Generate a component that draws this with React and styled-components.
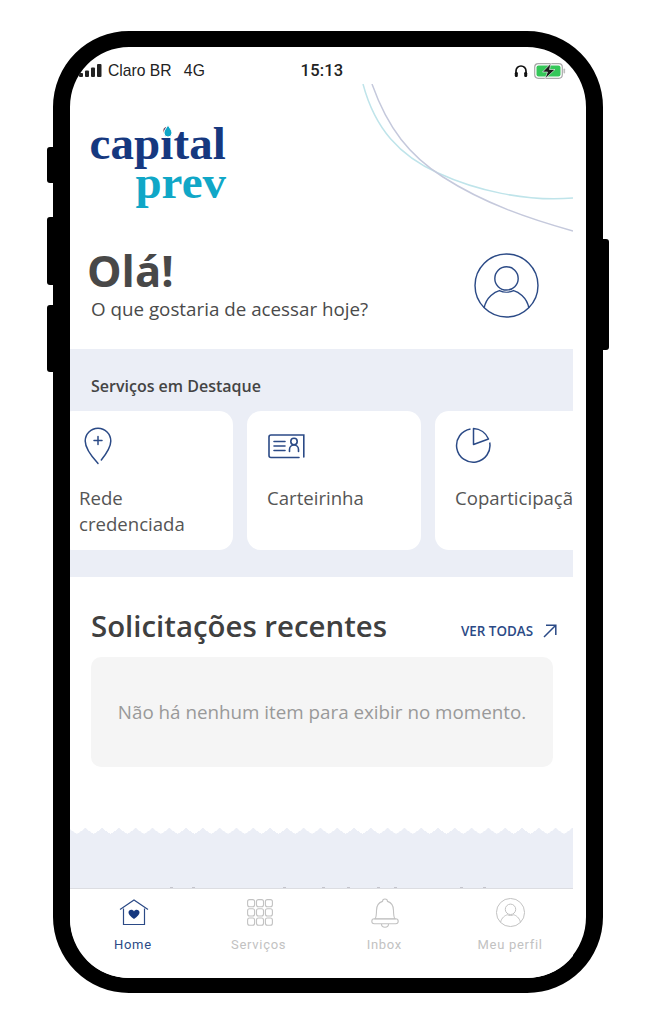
import React from "react";
import styled, { createGlobalStyle } from "styled-components";

const NAVY = "#2b4a86";
const BAND = "#ebeef6";

const GlobalStyle = createGlobalStyle`
  html, body {
    margin: 0;
    padding: 0;
    background: #fff;
  }
  body {
    font-family: "Open Sans", "Liberation Sans", sans-serif;
    overflow: hidden;
  }
`;

const Page = styled.div`
  width: 646px;
  height: 1024px;
  padding: 31px 0 0 53px;
  box-sizing: border-box;
`;

const Phone = styled.div`
  position: relative;
  width: 550px;
  height: 962px;
  box-sizing: border-box;
  border: solid #000;
  border-width: 16px 17px 15px 17px;
  border-radius: 76px;
  background: #fff;
`;

const SideButton = styled.span`
  position: absolute;
  top: ${p => p.$top}px;
  ${p => (p.$right ? "right: -23px;" : "left: -23px;")}
  width: 6px;
  height: ${p => p.$h}px;
  background: #000;
  border-radius: ${p => (p.$right ? "0 3px 3px 0" : "3px 0 0 3px")};
`;

const Screen = styled.div`
  height: 100%;
  display: flex;
  flex-direction: column;
  border-radius: 59px;
  overflow: hidden;
`;

const StatusBar = styled.div`
  height: 37px;
  flex: none;
  box-sizing: border-box;
  display: grid;
  grid-template-columns: 1fr auto 1fr;
  align-items: center;
  padding: 10px 20px 0 9px;
  font-family: "Liberation Sans", Arial, sans-serif;
  font-size: 15.7px;
  color: #222;
`;

const Carrier = styled.div`
  display: flex;
  align-items: center;
  gap: 5px;
`;

const Network = styled.span`
  margin-left: 7px;
  letter-spacing: 0.3px;
`;

const Clock = styled.div`
  font-family: Roboto, "Liberation Sans", sans-serif;
  font-weight: 500;
  font-size: 16.5px;
  letter-spacing: 0.2px;
  margin-right: 1px;
`;

const StatusRight = styled.div`
  display: flex;
  align-items: center;
  justify-content: flex-end;
  gap: 6px;
`;

const Content = styled.div`
  width: 503px;
  flex: 1;
  display: flex;
  flex-direction: column;
  min-height: 0;
`;

const Header = styled.header`
  position: relative;
  height: 265px;
  flex: none;
  box-sizing: border-box;
  padding: 40px 34px 0 21px;
`;

const Curves = styled.svg`
  position: absolute;
  top: 0;
  right: 0;
`;

const Logo = styled.div`
  position: relative;
  width: 135px;
  height: 78px;
  display: flex;
  flex-direction: column;
  align-items: flex-end;
  font-family: "Liberation Serif", serif;
  font-weight: 700;
`;

const LogoTop = styled.span`
  font-size: 47px;
  line-height: 39px;
  color: #16387f;
  letter-spacing: 0.1px;
`;

const LogoBottom = styled.span`
  font-size: 47px;
  line-height: 39px;
  color: #10a7c7;
`;

const LogoDrop = styled.svg`
  position: absolute;
  left: 71px;
  top: 0;
`;

const Greeting = styled.div`
  display: flex;
  align-items: flex-start;
  justify-content: space-between;
  margin-top: 47px;
`;

const Hello = styled.h1`
  margin: 0 0 0 -4px;
  font-size: 43.5px;
  line-height: 44px;
  font-weight: 700;
  color: #484848;
`;

const Question = styled.p`
  margin: 4px 0 0;
  font-size: 18.8px;
  line-height: 24px;
  color: #4a4a4a;
`;

const ProfileBadge = styled.div`
  margin-top: 4px;
  line-height: 0;
`;

const Band = styled.section`
  height: 228px;
  flex: none;
  background: ${BAND};
  padding-top: 27px;
  box-sizing: border-box;
  overflow: hidden;
`;

const BandTitle = styled.h2`
  margin: 0 0 14px 21px;
  font-size: 16px;
  line-height: 21px;
  font-weight: 600;
  color: #444;
`;

const CardRow = styled.div`
  display: flex;
  gap: 14px;
  margin-left: -11px;
`;

const Card = styled.div`
  flex: none;
  width: 174px;
  height: 139px;
  box-sizing: border-box;
  padding: 16px 20px 0;
  background: #fff;
  border-radius: 14px;
`;

const CardIcon = styled.div`
  height: 40px;
  margin-bottom: 18px;
  display: flex;
  align-items: flex-start;
  margin-left: ${p => p.$shift || 0}px;
  padding-top: ${p => p.$top || 0}px;
  box-sizing: border-box;
`;

const CardLabel = styled.div`
  font-size: 18.6px;
  line-height: 26px;
  color: #555;
  white-space: nowrap;
`;

const Recent = styled.section`
  height: 251px;
  flex: none;
  box-sizing: border-box;
  padding: 29px 20px 0 21px;
`;

const RecentHead = styled.div`
  display: flex;
  align-items: center;
  justify-content: space-between;
  height: 40px;
  margin-bottom: 11px;
`;

const RecentTitle = styled.h2`
  margin: 0;
  font-size: 29.4px;
  font-weight: 600;
  color: #404040;
  line-height: 40px;
`;

const SeeAll = styled.a`
  display: flex;
  align-items: center;
  gap: 10px;
  font-size: 13.4px;
  font-weight: 600;
  color: ${NAVY};
  margin: 9px -4px 0 0;
`;

const EmptyBox = styled.div`
  width: 462px;
  height: 110px;
  display: flex;
  align-items: center;
  justify-content: center;
  background: #f5f5f5;
  border-radius: 10px;
  font-size: 18.8px;
  color: #999;
`;

const ZigZag = styled.div`
  flex: 1;
  min-height: 0;
  background: ${BAND};
  position: relative;
  &::before {
    content: "";
    display: block;
    height: 6px;
    background: conic-gradient(from -54.8deg at 50% 100%, #fff 109.6deg, transparent 0) -1.5px 0 / 16.8px 6px repeat-x;
  }
`;

const Speck = styled.i`
  position: absolute;
  left: ${p => p.$x - 70}px;
  bottom: 0;
  width: 3px;
  height: 1px;
  background: #c4c4cc;
`;

const TabBar = styled.nav`
  height: 90px;
  flex: none;
  box-sizing: border-box;
  border-top: 1px solid #dcdde2;
  display: grid;
  grid-template-columns: repeat(4, 1fr);
  background: #fff;
`;

const Tab = styled.div`
  display: flex;
  flex-direction: column;
  align-items: center;
  padding-top: 8px;
  font-family: Roboto, "Liberation Sans", sans-serif;
  font-size: 13px;
  letter-spacing: 0.7px;
  color: ${p => (p.$active ? NAVY : "#c2c2c2")};
`;

const TabIcon = styled.div`
  height: 31px;
  margin-bottom: 9px;
  display: flex;
  align-items: center;
  justify-content: center;
  margin-left: ${p => p.$shift || 0}px;
`;

const Signal = () => (
  <svg width="24" height="14" viewBox="0 0 24 14" fill="#222">
    <rect x="0" y="9" width="4" height="4" rx="1" />
    <rect x="6" y="6.5" width="4" height="6.5" rx="1" />
    <rect x="12" y="3.5" width="4" height="9.5" rx="1" />
    <rect x="18" y="0" width="4.5" height="13" rx="1" />
  </svg>
);

const Headphones = () => (
  <svg width="14" height="14" viewBox="0 0 14 14" fill="none">
    <path d="M2 9V7a5 5 0 0 1 10 0v2" stroke="#111" strokeWidth="1.7" />
    <rect x="0.8" y="8" width="3" height="5" rx="1.2" fill="#111" />
    <rect x="10.2" y="8" width="3" height="5" rx="1.2" fill="#111" />
  </svg>
);

const Battery = () => (
  <svg width="32" height="16" viewBox="0 0 32 16" fill="none">
    <rect x="0.7" y="0.7" width="27.6" height="14.6" rx="3.5" stroke="#a9a9a9" strokeWidth="1.2" />
    <rect x="2.5" y="2.5" width="24" height="11" rx="2" fill="#35c759" />
    <rect x="29.5" y="5.5" width="1.6" height="5" rx="0.8" fill="#bdbdbd" />
    <path d="M17 0.3 8.5 9h5l-2.5 6.7L21 6.5h-5.5z" fill="#1a1a1a" stroke="#fff" strokeWidth="0.6" />
  </svg>
);

const Avatar = ({ size, color, width }) => (
  <svg width={size} height={size} viewBox="0 0 64 64" fill="none" stroke={color} strokeWidth={width}>
    <circle cx="32" cy="32" r="31" />
    <circle cx="32" cy="25" r="11.5" />
    <path d="M10 54c2-11 11-16 15-17 4 2 10 2 14 0 4 1 13 6 15 17" />
  </svg>
);

const PinIcon = () => (
  <svg width="28" height="38" viewBox="0 0 28 38" fill="none" stroke={NAVY} strokeWidth="1.5" strokeLinecap="round">
    <path d="M14 36.5C9 31 1.2 22.5 1.2 14a12.8 12.8 0 0 1 25.6 0c0 5.5-3.5 11.5-9.5 19" />
    <path d="M14 9.5v8M10 13.5h8" />
  </svg>
);

const IdIcon = () => (
  <svg width="37" height="25" viewBox="0 0 37 25" fill="none" stroke={NAVY} strokeWidth="1.6" strokeLinecap="round">
    <path d="M35.8 23V1H3a2 2 0 0 0-2 2v18.5a2 2 0 0 0 2 2h28" />
    <path d="M6 7.5h11M6 12h11M6 16.5h11" />
    <circle cx="26" cy="7.5" r="3.2" />
    <path d="M21.5 17.5v-2c0-2.5 2-4.5 4.5-4.5s4.500 2 4.500 4.500v2" />
  </svg>
);

const PieIcon = () => (
  <svg width="37" height="37" viewBox="0 0 37 37" fill="none" stroke={NAVY} strokeWidth="1.5" strokeLinejoin="round">
    <path d="M15.5 2A16.7 16.7 0 1 0 34.7 15.5" />
    <path d="M18.5 1.5V17.5L33.5 12A17 17 0 0 0 18.5 1.500z" />
  </svg>
);

const ArrowIcon = () => (
  <svg width="14" height="14" viewBox="0 0 14 14" fill="none" stroke={NAVY} strokeWidth="1.5">
    <path d="M1 13 12.5 1.5M3 1.2h9.8V11" />
  </svg>
);

const HomeIcon = () => (
  <svg width="30" height="27" viewBox="0 0 30 27" fill="none" stroke={NAVY} strokeWidth="1.2">
    <path d="M1 10.5 15 1l14 9.5" />
    <path d="M4.5 9.5V25.5h21V9.5" />
    <path
      d="M15 20c-3.5-2.500-5.500-4.200-5.500-6.400 0-3 4-3.800 5.500-1.200 1.500-2.600 5.500-1.800 5.500 1.200 0 2.200-2 3.900-5.500 6.400z"
      fill="#16387f"
      stroke="none"
    />
  </svg>
);

const GridIcon = () => (
  <svg width="26" height="27" viewBox="0 0 26 27" fill="none" stroke="#c2c2c2" strokeWidth="1.1">
    {[0, 9.2, 18.4].map(y =>
      [0, 8.9, 17.8].map(x => <rect key={`${x}-${y}`} x={x + 0.6} y={y + 0.6} width="7" height="7.2" rx="2" />)
    )}
  </svg>
);

const BellIcon = () => (
  <svg width="28" height="30" viewBox="0 0 28 30" fill="none" stroke="#c2c2c2" strokeWidth="1.1">
    <path d="M14 1c-1.500 0-2.500 1-2.500 2.400C7 4.800 5.500 8.500 5.500 12.500c0 4-.5 7-1.500 8.500h20c-1-1.500-1.500-4.500-1.500-8.500 0-4-1.500-7.700-6-9.100C16.500 2 15.500 1 14 1z" />
    <rect x="0.8" y="20.8" width="26.4" height="5" rx="2.5" />
    <path d="M10.500 26a3.500 3.200 0 0 0 7 0" />
  </svg>
);

const services = [
  { label: ["Rede", "credenciada"], icon: <PinIcon />, shift: 5 },
  { label: ["Carteirinha"], icon: <IdIcon />, shift: 1, top: 7 },
  { label: ["Coparticipação"], icon: <PieIcon />, shift: 0 },
];

const tabs = [
  { label: "Home", icon: <HomeIcon />, active: true, shift: 2 },
  { label: "Serviços", icon: <GridIcon />, shift: 2 },
  { label: "Inbox", icon: <BellIcon />, shift: 1 },
  { label: "Meu perfil", icon: <Avatar size={29} color="#c2c2c2" width={2.2} /> },
];

const specks = [170, 192, 283, 322, 347, 377, 394, 460, 483];

export default function App() {
  return (
    <>
      <GlobalStyle />
      <Page>
        <Phone>
          <SideButton $top={100} $h={36} />
          <SideButton $top={170} $h={68} />
          <SideButton $top={258} $h={67} />
          <SideButton $right $top={192} $h={111} />
          <Screen>
            <StatusBar>
              <Carrier>
                <Signal />
                <span>Claro BR</span>
                <Network>4G</Network>
              </Carrier>
              <Clock>15:13</Clock>
              <StatusRight>
                <Headphones />
                <Battery />
              </StatusRight>
            </StatusBar>
            <Content>
              <Header>
                <Curves width="503" height="160" viewBox="0 0 503 160" fill="none" strokeWidth="1.5">
                  <path d="M293 0C305 45 330 72 368 89C405 106 455 118 503 114" stroke="#bfe4ea" />
                  <path d="M302 0C318 45 340 72 373 93C415 120 460 135 503 147" stroke="#c5c9dc" />
                </Curves>
                <Logo>
                  <LogoTop>capital</LogoTop>
                  <LogoBottom>prev</LogoBottom>
                  <LogoDrop width="12" height="14" viewBox="0 0 12 14">
                    <path d="M6 1C7.5 4 10 6 10 9a4 4 0 0 1-8 0C2 6 4.5 4 6 1z" fill="#10a7c7" stroke="#fff" strokeWidth="1" />
                  </LogoDrop>
                </Logo>
                <Greeting>
                  <div>
                    <Hello>Olá!</Hello>
                    <Question>O que gostaria de acessar hoje?</Question>
                  </div>
                  <ProfileBadge>
                    <Avatar size={65} color={NAVY} width={1.4} />
                  </ProfileBadge>
                </Greeting>
              </Header>
              <Band>
                <BandTitle>Serviços em Destaque</BandTitle>
                <CardRow>
                  {services.map(s => (
                    <Card key={s.label[0]}>
                      <CardIcon $shift={s.shift} $top={s.top}>{s.icon}</CardIcon>
                      {s.label.map(line => (
                        <CardLabel key={line}>{line}</CardLabel>
                      ))}
                    </Card>
                  ))}
                </CardRow>
              </Band>
              <Recent>
                <RecentHead>
                  <RecentTitle>Solicitações recentes</RecentTitle>
                  <SeeAll>
                    VER TODAS <ArrowIcon />
                  </SeeAll>
                </RecentHead>
                <EmptyBox>Não há nenhum item para exibir no momento.</EmptyBox>
              </Recent>
              <ZigZag>
                {specks.map(x => (
                  <Speck key={x} $x={x} />
                ))}
              </ZigZag>
              <TabBar>
                {tabs.map(t => (
                  <Tab key={t.label} $active={t.active}>
                    <TabIcon $shift={t.shift}>{t.icon}</TabIcon>
                    {t.label}
                  </Tab>
                ))}
              </TabBar>
            </Content>
          </Screen>
        </Phone>
      </Page>
    </>
  );
}
